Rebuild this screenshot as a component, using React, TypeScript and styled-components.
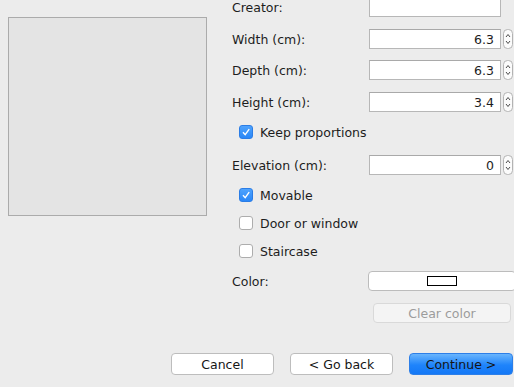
import React from "react";
import styled, { createGlobalStyle } from "styled-components";

const GlobalStyle = createGlobalStyle`
  html, body {
    margin: 0;
    padding: 0;
    background: #ececec;
    overflow: hidden;
  }
  body {
    font-family: "DejaVu Sans", "Liberation Sans", sans-serif;
    font-size: 12.5px;
    color: #1d1d1d;
  }
`;

const Window = styled.div`
  width: 514px;
  height: 387px;
  overflow: hidden;
  display: flex;
  flex-direction: column;
`;

const Body = styled.div`
  display: flex;
  align-items: flex-start;
  padding-left: 8px;
`;

const Preview = styled.div`
  margin-top: 17px;
  width: 197px;
  height: 197px;
  flex-shrink: 0;
  border: 1px solid #ababab;
  background: #e4e4e4;
`;

const Form = styled.div`
  margin-left: 25px;
  margin-top: -3px;
  display: flex;
  flex-direction: column;
`;

const Row = styled.div<{ $gap: number; $h?: number }>`
  display: grid;
  grid-template-columns: 137px 132px 12px;
  align-items: center;
  height: ${(p) => p.$h ?? 20}px;
  margin-top: ${(p) => p.$gap}px;
`;

const Label = styled.span`
  white-space: nowrap;
`;

const Field = styled.div`
  height: 20px;
  box-sizing: border-box;
  background: #fff;
  border: 1px solid #b7b7b7;
  border-top-color: #a9a9a9;
  padding-right: 6px;
  display: flex;
  align-items: center;
  justify-content: flex-end;
`;

const SpinBox = styled.div`
  margin-left: 2px;
  display: flex;
`;

const CheckRow = styled.label<{ $gap: number }>`
  display: flex;
  align-items: center;
  gap: 7px;
  height: 14px;
  padding-left: 7px;
  margin-top: ${(p) => p.$gap}px;
  white-space: nowrap;
`;

const Box = styled.span<{ $checked?: boolean }>`
  width: 14px;
  height: 14px;
  box-sizing: border-box;
  border-radius: 3px;
  display: flex;
  align-items: center;
  justify-content: center;
  background: ${(p) =>
    p.$checked ? "linear-gradient(#4fa3fd, #2a87f7)" : "#fff"};
  border: 1px solid ${(p) => (p.$checked ? "#2b7de6" : "#adadad")};
`;

const ColorButton = styled.div`
  grid-column: 2 / span 2;
  margin-left: -1px;
  width: 148px;
  height: 20px;
  box-sizing: border-box;
  background: #fff;
  border: 1px solid #bcbcbc;
  border-radius: 4px;
  display: flex;
  align-items: center;
  justify-content: center;
`;

const Swatch = styled.span<{ $color: string }>`
  width: 30px;
  height: 10px;
  box-sizing: border-box;
  border: 1px solid #000;
  background: ${(p) => p.$color};
`;

const ClearButton = styled.div`
  grid-column: 2 / span 2;
  margin-left: 4px;
  width: 138px;
  height: 20px;
  box-sizing: border-box;
  background: #f4f4f4;
  border: 1px solid #d9d9d9;
  border-radius: 4px;
  color: #9c9c9c;
  display: flex;
  align-items: center;
  justify-content: center;
`;

const Footer = styled.div`
  margin-top: auto;
  padding: 0 1px 12px 0;
  display: flex;
  justify-content: flex-end;
  gap: 16px;
`;

const Button = styled.div<{ $primary?: boolean; $w: number }>`
  width: ${(p) => p.$w}px;
  height: 22px;
  box-sizing: border-box;
  border-radius: 4px;
  display: flex;
  align-items: center;
  justify-content: center;
  color: #151515;
  background: ${(p) =>
    p.$primary ? "linear-gradient(#69b5fd, #1f84fb 55%, #1478f6)" : "#fff"};
  border: 1px solid ${(p) => (p.$primary ? "#2d7fe8" : "#bdbdbd")};
`;

const Spinner = () => (
  <SpinBox>
    <svg width="10" height="20" viewBox="0 0 10 20">
      <rect x="0.5" y="0.5" width="9" height="19" rx="4" fill="#fbfbfb" stroke="#b3b3b3" />
      <path d="M3 8 L5 5.5 L7 8" stroke="#4a4a4a" strokeWidth="1" fill="none" />
      <path d="M3 12 L5 14.5 L7 12" stroke="#4a4a4a" strokeWidth="1" fill="none" />
    </svg>
  </SpinBox>
);

const Check = ({ checked }: { checked?: boolean }) => (
  <Box $checked={checked}>
    {checked && (
      <svg width="10" height="10" viewBox="0 0 10 10">
        <path d="M2 5.2 L4.2 7.6 L8.2 2.2" stroke="#fff" strokeWidth="1.4" fill="none" />
      </svg>
    )}
  </Box>
);

const sizeRows = [
  { label: "Width (cm):", value: "6.3", gap: 12 },
  { label: "Depth (cm):", value: "6.3", gap: 11 },
  { label: "Height (cm):", value: "3.4", gap: 12 },
];

export default function App() {
  return (
    <Window>
      <GlobalStyle />
      <Body>
        <Preview />
        <Form>
          <Row $gap={0}>
            <Label>Creator:</Label>
            <Field />
          </Row>
          {sizeRows.map((r) => (
            <Row key={r.label} $gap={r.gap}>
              <Label>{r.label}</Label>
              <Field>{r.value}</Field>
              <Spinner />
            </Row>
          ))}
          <CheckRow $gap={13}>
            <Check checked />
            Keep proportions
          </CheckRow>
          <Row $gap={16}>
            <Label>Elevation (cm):</Label>
            <Field>0</Field>
            <Spinner />
          </Row>
          <CheckRow $gap={13}>
            <Check checked />
            Movable
          </CheckRow>
          <CheckRow $gap={14}>
            <Check />
            Door or window
          </CheckRow>
          <CheckRow $gap={14}>
            <Check />
            Staircase
          </CheckRow>
          <Row $gap={13}>
            <Label>Color:</Label>
            <ColorButton>
              <Swatch $color="#fff" />
            </ColorButton>
          </Row>
          <Row $gap={12}>
            <span />
            <ClearButton>Clear color</ClearButton>
          </Row>
        </Form>
      </Body>
      <Footer>
        <Button $w={103}>Cancel</Button>
        <Button $w={103}>&lt; Go back</Button>
        <Button $w={104} $primary>
          Continue &gt;
        </Button>
      </Footer>
    </Window>
  );
}
